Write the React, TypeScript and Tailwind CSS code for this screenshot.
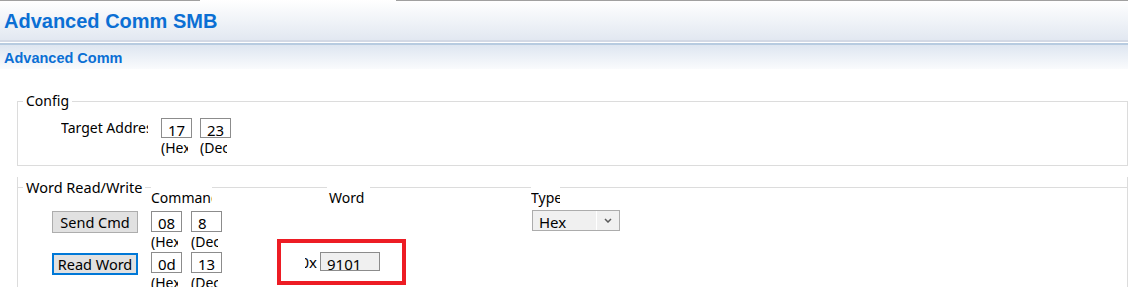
import React from 'react';

type FieldProps = { value: string; sub?: string; h: string };

// small numeric box with a clipped caption under it
function NumField({ value, sub, h }: FieldProps) {
  return (
    <div className="w-[31px]">
      <div className={`${h} w-[31px] overflow-hidden whitespace-nowrap border border-[#8c8c8c] bg-white pl-[6px] pt-[1px] text-[15px] leading-[20px]`}>
        {value}
      </div>
      {sub && <div className="h-[20px] w-[27px] overflow-hidden whitespace-nowrap leading-[20px]">{sub}</div>}
    </div>
  );
}

const Rule = ({ className }: { className: string }) => <div className={`mt-[10px] h-[1px] shrink-0 bg-[#dcdcdc] ${className}`} />;

export default function App() {
  return (
    <div className="h-[287px] w-[1128px] overflow-hidden bg-white font-['Noto_Sans',sans-serif] text-[14px] text-black">
      {/* title band */}
      <div className="h-[40px] bg-gradient-to-b from-white to-[#e2e8f1]">
        <div className="flex h-[1px]">
          <div className="w-[200px] bg-[#a0a0a0]" />
          <div className="w-[196px]" />
          <div className="flex-1 bg-[#a0a0a0]" />
        </div>
        <h1 className="pl-[4px] pt-[8px] font-['Liberation_Sans',Arial,sans-serif] text-[20px] font-bold leading-[24px] text-[#0b6fd4]">
          Advanced Comm SMB
        </h1>
      </div>
      <div className="h-[2px] bg-[#d3d9e5]" />
      <div className="h-[1px] bg-white" />
      <div className="h-[2px] bg-[#b7cbe0]" />
      <div className="h-[24px] bg-gradient-to-b from-[#dee6f1] to-[#fafbfd]">
        <h2 className="pl-[4px] font-['Liberation_Sans',Arial,sans-serif] text-[14.5px] font-bold leading-[26px] text-[#0b6fd4]">
          Advanced Comm
        </h2>
      </div>

      {/* Config */}
      <div className="ml-[17px] mt-[32px] h-[65px] w-[1111px] border border-[#dcdcdc]">
        <div className="-mt-[11px] ml-[5px] w-fit bg-white px-[3px] leading-[20px]">Config</div>
        <div className="mt-[7px] flex items-start">
          <div className="ml-[43px] w-[87px] overflow-hidden whitespace-nowrap leading-[20px]">Target Address:</div>
          <div className="ml-[13px]">
            <NumField value="17" sub="(Hex)" h="h-[20px]" />
          </div>
          <div className="ml-[8px]">
            <NumField value="23" sub="(Dec)" h="h-[20px]" />
          </div>
        </div>
      </div>

      {/* Word Read/Write: top edge is built from rule segments between the captions */}
      <div className="ml-[17px] mt-[21px] h-[130px] w-[1111px] border-x border-b border-[#dcdcdc]">
        <div className="-mt-[10px] flex items-start">
          <Rule className="-ml-[1px] w-[6px]" />
          <div className="w-[122px] shrink-0 whitespace-nowrap px-[3px] text-[14.5px] leading-[20px]">Word Read/Write</div>
          <Rule className="w-[6px]" />
          <div className="mt-[11px] w-[61px] shrink-0 overflow-hidden whitespace-nowrap leading-[20px]">Command</div>
          <Rule className="w-[115px]" />
          <div className="mt-[11px] w-[43px] shrink-0 pl-[2px] leading-[20px]">Word</div>
          <Rule className="w-[161px]" />
          <div className="mt-[11px] w-[29px] shrink-0 overflow-hidden whitespace-nowrap leading-[20px]">Type</div>
          <Rule className="-mr-[1px] flex-1" />
        </div>

        {/* controls */}
        <div className="flex items-start">
          <div className="w-[128px]">
            <button className="ml-[34px] mt-[3px] block h-[22px] w-[86px] border border-[#adadad] bg-[#e1e1e1] text-[14.5px] leading-[20px]">
              Send Cmd
            </button>
            <button className="ml-[34px] mt-[20px] block h-[22px] w-[86px] border-2 border-[#0078d7] bg-[#e1e1e1] text-[14.5px] leading-[18px]">
              Read Word
            </button>
          </div>

          <div className="w-[129px] pl-[5px] pt-[3px]">
            <div className="flex gap-[9px]">
              <NumField value="08" sub="(Hex)" h="h-[21px]" />
              <NumField value="8" sub="(Dec)" h="h-[21px]" />
            </div>
            <div className="flex gap-[9px]">
              <NumField value="0d" sub="(Hex)" h="h-[21px]" />
              <NumField value="13" sub="(Dec)" h="h-[21px]" />
            </div>
          </div>

          <div className="w-[131px] pl-[2px] pt-[31px]">
            <div className="flex h-[46px] w-[129px] items-start border-4 border-[#ed1c24]">
              <div className="ml-[24px] mt-[9px] flex h-[19px] w-[12px] justify-end overflow-hidden whitespace-nowrap text-[15px] leading-[20px]">
                0x
              </div>
              <div className="ml-[3px] mt-[9px] h-[19px] w-[60px] overflow-hidden border border-[#8c8c8c] bg-[#f0f0f0] pl-[6px] pt-[1px] text-[15px] leading-[20px]">
                9101
              </div>
            </div>
          </div>

          <div className="ml-[126px] pt-[2px]">
            <div className="flex h-[21px] w-[88px] overflow-hidden border border-[#acacac] bg-[#f0f0f0]">
              <div className="w-[63px] pl-[6px] pt-[1px] text-[15px] leading-[20px]">Hex</div>
              <div className="w-[1px] bg-white" />
              <div className="flex flex-1 items-center justify-center">
                <svg width="8" height="5" viewBox="0 0 8 5" fill="none">
                  <path d="M1 1l3 3 3-3" stroke="#5a5a5a" strokeWidth="1.5" />
                </svg>
              </div>
            </div>
          </div>
        </div>
      </div>
    </div>
  );
}
